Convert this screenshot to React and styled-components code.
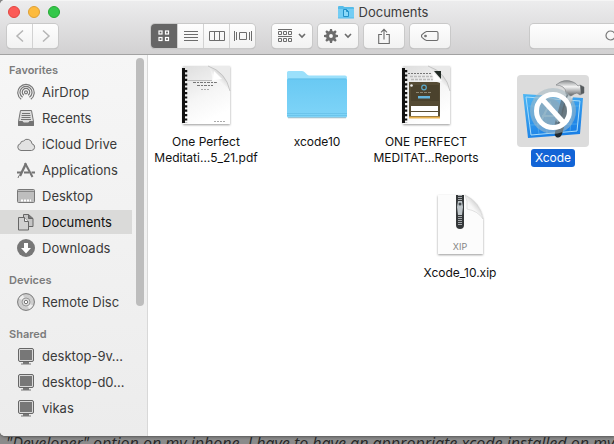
import React from "react";
import styled, { createGlobalStyle } from "styled-components";

const GlobalStyle = createGlobalStyle`
  * { box-sizing: border-box; }
  body { margin: 0; font-family: Inter, "Liberation Sans", sans-serif; color: #333; }
  button { font: inherit; }
  svg { display: block; flex: none; }
`;

const Page = styled.div`
  display: flex;
  flex-direction: column;
  height: 100vh;
  overflow: hidden;
  background: #8b8b8b;
`;

const Window = styled.main`
  flex: 1;
  min-height: 0;
  display: flex;
  flex-direction: column;
  overflow: hidden;
  background: #fff;
  border-radius: 5px 0 0 5px;
  box-shadow: 0 1px 3px #555;
`;

const Header = styled.header`
  height: 55px;
  flex: none;
  background: linear-gradient(#ececed, #d2d1d2);
  border-top: 1px solid #f5f5f5;
  border-bottom: 1px solid #a2a2a2;
`;

const TitleBar = styled.div`
  display: flex;
  align-items: center;
  height: 22px;
`;

const Lights = styled.div`
  display: flex;
  gap: 8px;
  width: 152px;
  padding-left: 8px;
`;

const Light = styled.button`
  width: 12px;
  height: 12px;
  padding: 0;
  border-radius: 50%;
  border: 1px solid ${(p) => p.$edge};
  background: ${(p) => p.$fill};
`;

const Title = styled.h1`
  flex: 1;
  display: flex;
  align-items: center;
  justify-content: center;
  gap: 5px;
  margin: 0;
  font-size: 13px;
  line-height: 16px;
  font-weight: 400;
  color: #3c3c3c;
`;

const Toolbar = styled.div`
  display: flex;
  gap: 6px;
  padding: 1px 0 0 7px;
`;

const ButtonGroup = styled.div`
  display: flex;
  flex: none;
  margin-right: ${(p) => p.$after || 0}px;
  border-radius: 4px;
  box-shadow: 0 0 0 1px #c9c9c9, 0 1px 1px #a5a5a5;
`;

const ToolButton = styled.button`
  display: flex;
  align-items: center;
  justify-content: center;
  gap: 6px;
  width: ${(p) => p.$width}px;
  height: 24px;
  padding: 0;
  border: 0;
  border-left: 1px solid #d2d2d2;
  color: ${(p) => (p.$active ? "#fff" : p.$muted ? "#b5b5b5" : "#6c6c6c")};
  background: ${(p) => (p.$active ? "#666" : "linear-gradient(#fefefe, #f2f2f2)")};
  &:first-child { border-left: 0; border-radius: 4px 0 0 4px; }
  &:last-child { border-radius: 0 4px 4px 0; }
  &:only-child { border-radius: 4px; }
`;

const Search = styled.label`
  flex: none;
  display: flex;
  align-items: center;
  width: 230px;
  height: 24px;
  padding-left: 75px;
  border-radius: 4px;
  color: #777;
  background: linear-gradient(#fefefe, #f2f2f2);
  box-shadow: 0 0 0 1px #c9c9c9, 0 1px 1px #a5a5a5;
`;

const SearchInput = styled.input`
  min-width: 0;
  flex: 1;
  border: 0;
  outline: 0;
  background: transparent;
`;

const Body = styled.div`
  flex: 1;
  min-height: 0;
  display: flex;
`;

const Sidebar = styled.aside`
  flex: none;
  width: 148px;
  display: flex;
  background: linear-gradient(#f6f6f6, #ececec);
  border-right: 1px solid #d8d8d8;
`;

const Places = styled.nav`
  width: 132px;
  padding-top: 5px;
`;

const Section = styled.section`
  margin-bottom: 10px;
`;

const SectionTitle = styled.h2`
  margin: 0;
  padding-left: 9px;
  font-size: 11px;
  line-height: 20px;
  font-weight: 600;
  color: #7b7b7b;
`;

const PlaceList = styled.div`
  display: flex;
  flex-direction: column;
  gap: 2px;
`;

const Place = styled.a`
  display: flex;
  align-items: center;
  gap: 6px;
  height: 24px;
  padding-left: 17px;
  font-size: 13px;
  text-decoration: none;
  white-space: nowrap;
  color: ${(p) => (p.$active ? "#111" : "#3a3a3a")};
  background: ${(p) => (p.$active ? "#dadad9" : "transparent")};
`;

const ScrollThumb = styled.div`
  width: 8px;
  height: 65%;
  margin: 3px 3px 0 4px;
  border-radius: 4px;
  background: #bdbdbd;
`;

const Canvas = styled.section`
  position: relative;
  flex: 1;
  min-width: 0;
  background: #fff;
`;

const FileItem = styled.button`
  position: absolute;
  left: ${(p) => p.$x}px;
  top: ${(p) => p.$y}px;
  width: 110px;
  display: flex;
  flex-direction: column;
  align-items: center;
  gap: 2px;
  padding: 0;
  border: 0;
  background: none;
`;

const Thumb = styled.span`
  width: 72px;
  height: 72px;
  padding: 4px;
  border-radius: 4px;
  background: ${(p) => (p.$active ? "#dcdcdc" : "transparent")};
`;

const FileName = styled.span`
  padding: 1px 4px;
  border-radius: 3px;
  font-size: 12px;
  line-height: 16px;
  white-space: pre;
  color: ${(p) => (p.$active ? "#fff" : "#111")};
  background: ${(p) => (p.$active ? "#1264d6" : "transparent")};
`;

const Article = styled.p`
  flex: none;
  height: 8px;
  margin: 0;
  padding-left: 6px;
  overflow: hidden;
  font-family: "Open Sans", sans-serif;
  font-style: italic;
  font-size: 16px;
  line-height: 14px;
  white-space: nowrap;
  color: #262626;
`;

const line = { fill: "none", stroke: "currentColor" };

const Chevron = ({ d }) => (
  <svg width="10" height="14" viewBox="0 0 10 14" {...line} strokeWidth="1.5"><path d={d} /></svg>
);
const Down = () => (
  <svg width="8" height="6" viewBox="0 0 8 6" {...line} strokeWidth="1.6"><path d="M1 1l3 3 3-3" /></svg>
);
const GridIcon = () => (
  <svg width="12" height="12" viewBox="0 0 12 12" {...line} strokeWidth="1.2">
    {[[1, 1], [7.5, 1], [1, 7.5], [7.5, 7.5]].map(([x, y]) => <rect key={x + "-" + y} x={x} y={y} width="3" height="3" />)}
  </svg>
);
const ListIcon = () => (
  <svg width="14" height="12" viewBox="0 0 14 12" {...line}><path d="M0 1.5h14M0 4.5h14M0 7.5h14M0 10.5h14" /></svg>
);
const ColumnsIcon = () => (
  <svg width="16" height="12" viewBox="0 0 16 12" {...line}><path d="M.5 1.5h15v9H.5zM5.5 1.5v9M10.5 1.5v9" /></svg>
);
const FlowIcon = () => (
  <svg width="18" height="12" viewBox="0 0 18 12" {...line}><path d="M5.5 2.5h7v7h-7zM.5 1v10M2.5 2v8M15.5 2v8M17.5 1v10" /></svg>
);
const ArrangeIcon = () => (
  <svg width="14" height="14" viewBox="0 0 14 14" {...line}>
    <path d="M0 .5h14M0 7.5h14M.5 2.5h3v3h-3zM5.5 2.5h3v3h-3zM10.5 2.5h3v3h-3zM.5 9.5h3v3h-3zM5.5 9.5h3v3h-3zM10.5 9.5h3v3h-3z" />
  </svg>
);
const GearIcon = () => (
  <svg width="14" height="14" viewBox="-7 -7 14 14">
    <g fill="currentColor">
      {[0, 45, 90, 135, 180, 225, 270, 315].map((a) => <path key={a} transform={`rotate(${a})`} d="M-1.6-4L-1-7H1L1.6-4z" />)}
    </g>
    <circle r="3.4" fill="none" stroke="currentColor" strokeWidth="3" />
  </svg>
);
const ShareIcon = () => (
  <svg width="12" height="17" viewBox="0 0 12 17" {...line} strokeWidth="1.1"><path d="M4 6.5H.7v9h10.6v-9H8M6 11.5V1.5M3 4.3l3-3 3 3" /></svg>
);
const TagIcon = () => (
  <svg width="18" height="12" viewBox="0 0 18 12" {...line} strokeWidth="1.1">
    <path d="M5.5 1.5h10q1.5 0 1.5 1.5v6q0 1.5-1.5 1.5h-10Q4 10.2 1 7.3Q0 6 1 4.7Q4 1.8 5.5 1.5z" /><circle cx="4.5" cy="6" r=".8" />
  </svg>
);
const SearchIcon = () => (
  <svg width="13" height="13" viewBox="0 0 13 13" {...line} strokeWidth="1.2"><circle cx="5.5" cy="5.5" r="4.5" /><path d="M9 9l3.5 3.5" /></svg>
);
const TitleFolder = () => (
  <svg width="16" height="14" viewBox="0 0 16 14">
    <path d="M0 2q0-1 1-1h4l1.5 1H15q1 0 1 1v10q0 .6-.6.6H.6Q0 13.6 0 13z" fill="#56bce9" />
    <path d="M0 4h16v8.5H0z" fill="#74cdf4" />
    <path d="M5.5 4.5h3l2 2v5h-5zM8.5 4.5v2h2" fill="#8bd8f8" stroke="#2291c9" />
  </svg>
);

const placeArt = {
  airdrop: (
    <g fill="none" stroke="#777" strokeWidth="1.2">
      <path d="M4.2 16.3a8.2 8.2 0 1 1 9.6 0M5.6 14.3a6 6 0 1 1 6.8 0M6.9 12.2a3.7 3.7 0 1 1 4.2 0" />
      <circle cx="9" cy="9.3" r="1.5" />
    </g>
  ),
  recents: (
    <g stroke="#747474"><path d="M3.5 1.5h11l2 11v4h-15v-4z" fill="#ddd" /><path d="M5 4.5h8M4.5 6.5h9M4.5 8.5h9M4 10.5h10" /><path d="M1.5 12.5h4l1 1.5h5l1-1.5h4v4h-15z" fill="#747474" /></g>
  ),
  cloud: <path d="M4 15.500a3.500 3.500 0 0 1-.5-6.900A2.800 2.800 0 0 1 6.500 6 4.800 4.800 0 0 1 15 8.800a3.400 3.400 0 0 1-.5 6.700z" fill="#e2e2e2" stroke="#777" />,
  apps: (
    <g fill="none" stroke="#747474"><path d="M9 2.500L3 15" strokeWidth="2.4" /><path d="M8 2l7.500 14" strokeWidth="2" /><path d="M0 11.500h5M7 11.500h5M14.500 11.500H18" strokeWidth="1.8" /><path d="M2 14.500L1 17" /></g>
  ),
  desktop: (
    <g><rect x=".5" y="2.5" width="17" height="13" rx="1" fill="#bebebe" stroke="#777" /><path d="M1 4.5h16" stroke="#888" /><path d="M4 13.5h10" stroke="#fff" strokeWidth="2" strokeDasharray="2 1" /></g>
  ),
  documents: (
    <g fill="#c5c5c5" stroke="#666"><path d="M6.5 1.5h5l4.500 4v8H6.5z" /><path d="M11.5 1.5v4H16" fill="#777" /><path d="M1.500 4.500h6l4 4v8.500h-10z" fill="#d0d0d0" /><path d="M7.500 4.500v4h4" fill="#eee" /></g>
  ),
  downloads: (
    <g><circle cx="9" cy="9" r="9" fill="#777" /><path d="M7 4h4v5h3l-5 5.5L4 9h3z" fill="#fff" /></g>
  ),
  disc: (
    <g fill="none" stroke="#777"><circle cx="9" cy="9" r="8.4" fill="#cecece" /><path d="M9 9L2 5.5A8 8 0 0 1 6 2zM9 9l7 3.5a8 8 0 0 1-4 3.5z" fill="#eee" stroke="none" /><circle cx="9" cy="9" r="4" fill="#ddd" stroke="#999" /><circle cx="9" cy="9" r="1.7" fill="#fff" /></g>
  ),
  pc: (
    <g><rect x="1.5" y="1.5" width="15" height="13" rx="1.5" fill="#d8d8d8" stroke="#666" /><rect x="3.5" y="3.5" width="11" height="9" fill="#777" stroke="#777" /><path d="M6 15h6v1.5H6zM4 16.5h10v1H4z" fill="#777" /></g>
  ),
};

const PaperDefs = ({ id }) => (
  <defs>
    <filter id={id + "-shadow"} x="-10%" y="-10%" width="125%" height="125%"><feDropShadow dx="0" dy="1" stdDeviation="1" floodOpacity=".4" /></filter>
    <linearGradient id={id + "-paper"} x2=".4" y2="1"><stop stopColor="#dedede" /><stop offset=".6" stopColor="#f6f6f6" /><stop offset="1" stopColor="#fff" /></linearGradient>
    <linearGradient id={id + "-curl"} x1="0" y1="1" x2=".7" y2=".2"><stop offset=".2" stopColor="#fff" /><stop offset=".6" stopColor="#f6f6f6" /><stop offset="1" stopColor="#c4c4c4" /></linearGradient>
  </defs>
);

const Binding = () => (
  <g>
    <path d="M8 5h3v55H8z" fill="#111" />
    <path d="M12 7v53" stroke="#111" strokeWidth="2.5" strokeDasharray="2.2 2.2" />
  </g>
);

const PdfArt = () => (
  <svg width="64" height="64" viewBox="0 0 64 64">
    <PaperDefs id="pdf" />
    <path d="M9 3h47v58H9z" fill="url(#pdf-paper)" filter="url(#pdf-shadow)" />
    <path d="M34 3h22v24Q51 9 34 3z" fill="#ebebeb" />
    <Binding />
    <path d="M14 17.5h25" stroke="#bbb" />
    <path d="M19 19.5h25M23 22.5h16" stroke="#777" strokeDasharray="3 1 2 1" />
    <path d="M27 26.5h8M40 58.5h11" stroke="#aaa" strokeDasharray="2 1" />
    <path d="M34 3Q52 9 56 28Q51 20 38 18Q39 10 34 3z" fill="url(#pdf-curl)" />
    <path d="M34 3Q52 9 56 28" fill="none" stroke="#bdbdbd" strokeWidth=".8" />
    <path d="M40 8l8 8-9 1z" fill="#fff" />
  </svg>
);

const ReportArt = () => (
  <svg width="64" height="64" viewBox="0 0 64 64">
    <PaperDefs id="report" />
    <path d="M9 3h47v58H9z" fill="url(#report-paper)" filter="url(#report-shadow)" />
    <path d="M34 3h22v24Q51 9 34 3z" fill="#e9e9e9" />
    <Binding />
    <path d="M14 10.5h25" stroke="#777" strokeDasharray="2 1" />
    <path d="M16 13.5h24M17 16.5h22" stroke="#bbb" strokeWidth="1.5" strokeDasharray="3 1" />
    <path d="M15 19h31v36H15z" fill="#554b34" />
    <path d="M17 22h28v16H17z" fill="#473e2b" opacity=".7" />
    <circle cx="30" cy="24.5" r="2.3" fill="none" stroke="#5aa8c8" strokeWidth="1.2" />
    <path d="M22 29.5h15" stroke="#8d8672" strokeDasharray="3 1" />
    <path d="M24 33h12v2.5H24z" fill="#65b5dc" />
    <circle cx="17.500" cy="22.500" r="1.3" fill="#eee" />
    <path d="M17 43h27v5H17zM17 49h27v4H17z" fill="#fff" />
    <path d="M15 54.5h31" stroke="#e9b351" strokeWidth="2" />
    <path d="M34 3Q52 9 56 28Q52 20 39 18Q39 10 34 3z" fill="url(#report-curl)" />
    <path d="M34 3Q52 9 56 28" fill="none" stroke="#bdbdbd" strokeWidth=".8" />
    <path d="M39 9l9 9-8-1z" fill="#fff" /><path d="M40 8h7v8z" fill="#222b26" />
  </svg>
);

const FolderArt = () => (
  <svg width="64" height="64" viewBox="0 0 64 64">
    <defs><linearGradient id="folder-front" x2="0" y2="1"><stop stopColor="#69c9f3" /><stop offset="1" stopColor="#7fd4f8" /></linearGradient></defs>
    <path d="M2 9.500Q2 8 3.500 8H17q2 0 3 1.500l2 2q1 1 2.500 1H60q2 0 2 2V53q0 1.500-1.500 1.500h-57Q2 54.500 2 53z" fill="#9be0fb" />
    <path d="M2 17q0-1.500 1.500-1.500h57q1.500 0 1.500 1.500v36q0 1.500-1.500 1.500h-57Q2 54.500 2 53z" fill="url(#folder-front)" />
    <path d="M2 50.500h60M2 52.500h60M3 16h58" stroke="#5fbbe3" strokeWidth=".6" />
    <path d="M3 54.800h58" stroke="#91a9b3" strokeWidth=".7" />
  </svg>
);

const XcodeArt = () => (
  <svg width="64" height="64" viewBox="0 0 64 64">
    <defs>
      <linearGradient id="xc-blue" x2=".4" y2="1"><stop stopColor="#4eb7f4" /><stop offset="1" stopColor="#1a80e6" /></linearGradient>
      <linearGradient id="xc-steel" x2="0" y2="1"><stop stopColor="#8b8e90" /><stop offset=".4" stopColor="#f4f4f4" /><stop offset="1" stopColor="#5f6366" /></linearGradient>
    </defs>
    <path d="M2 15l60 4-3 36-52 4z" fill="url(#xc-blue)" />
    <path d="M5 18l54 4-3 30-46 4z" fill="none" stroke="#a8dcfa" />
    <path d="M13 19l5 36M23 20l3 34M52 22l-3 31M6 27h52M8 46l48-1" stroke="#66bdf2" strokeWidth=".5" />
    <path d="M46 15l6 2-11 38q-2 5-6 3-2-2-1-5z" fill="#222b32" />
    <path d="M48 12l5 2-4 15-5-2z" fill="url(#xc-steel)" />
    <path d="M35 6q8-7 17-3 3 1 5 4l2-1 4 2v6l-4 2-3-2-3 1-3 2-5-2q0-5-3-7-3-2-7-2z" fill="url(#xc-steel)" stroke="#75797c" strokeWidth=".6" />
    <path d="M59 6l4 2v6l-3 1z" fill="#555a5d" />
    <circle cx="32" cy="32" r="23" fill="#a5b9c2" fillOpacity=".55" />
    <circle cx="27" cy="33" r="14" fill="#88a7ba" fillOpacity=".65" />
    <path d="M43 20l-8 30" stroke="#59656c" strokeWidth="5" opacity=".65" />
    <path d="M20 42l9-18 8 19M21 37h18" fill="none" stroke="#9bbaca" strokeWidth="2" opacity=".7" />
    <circle cx="32" cy="32" r="16.5" fill="none" stroke="#fff" strokeWidth="5" />
    <path d="M21 20l22 24" stroke="#fff" strokeWidth="5" />
  </svg>
);

const ArchiveLabel = styled.text`
  font-family: Inter, sans-serif;
  font-size: 9px;
  fill: #858585;
  text-anchor: middle;
`;

const XipArt = () => (
  <svg width="64" height="64" viewBox="0 0 64 64">
    <PaperDefs id="xip" />
    <path d="M10 1h27q15 8 18 24v35H10z" fill="#fcfcfc" filter="url(#xip-shadow)" />
    <path d="M28 1h8v30q0 4-4 4t-4-4z" fill="#35383a" />
    <path d="M32 1v7M32 20v12" stroke="#a5a9ad" strokeWidth="4" strokeDasharray="1 1" />
    <path d="M30 7h4l1 6-1 8h-4l-1-8z" fill="#bfc6ca" /><circle cx="32" cy="10" r="1.5" fill="#454b4f" />
    <path d="M37 1Q52 8 55 25Q50 17 39 15Q40 7 37 1z" fill="url(#xip-curl)" stroke="#d0d0d0" strokeWidth=".6" />
    <ArchiveLabel x="32" y="56">XIP</ArchiveLabel>
  </svg>
);

const sections = [
  ["Favorites", [["AirDrop", "airdrop"], ["Recents", "recents"], ["iCloud Drive", "cloud"], ["Applications", "apps"], ["Desktop", "desktop"], ["Documents", "documents"], ["Downloads", "downloads"]]],
  ["Devices", [["Remote Disc", "disc"]]],
  ["Shared", [["desktop-9v…", "pc"], ["desktop-d0…", "pc"], ["vikas", "pc"]]],
];

const files = [
  { name: "One Perfect\nMeditati…5_21.pdf", x: 3, y: 4, Art: PdfArt },
  { name: "xcode10", x: 114, y: 4, Art: FolderArt },
  { name: "ONE PERFECT\nMEDITAT…Reports", x: 223, y: 4, Art: ReportArt },
  { name: "Xcode", x: 350, y: 20, Art: XcodeArt, active: true },
  { name: "Xcode_10.xip", x: 257, y: 135, Art: XipArt },
];

export default function App() {
  return (
    <Page>
      <GlobalStyle />
      <Window>
        <Header>
          <TitleBar>
            <Lights>
              <Light aria-label="Close" $fill="#fc5b57" $edge="#e24640" />
              <Light aria-label="Minimize" $fill="#fdbb3e" $edge="#dfa035" />
              <Light aria-label="Zoom" $fill="#34c84a" $edge="#24a933" />
            </Lights>
            <Title><TitleFolder />Documents</Title>
          </TitleBar>
          <Toolbar>
            <ButtonGroup $after={87}>
              <ToolButton $width={25} $muted aria-label="Back"><Chevron d="M8 1.5L2 7l6 5.5" /></ToolButton>
              <ToolButton $width={26} $muted aria-label="Forward"><Chevron d="M2 1.5L8 7l-6 5.5" /></ToolButton>
            </ButtonGroup>
            <ButtonGroup $after={11}>
              <ToolButton $width={26} $active aria-label="Icon view"><GridIcon /></ToolButton>
              <ToolButton $width={26} aria-label="List view"><ListIcon /></ToolButton>
              <ToolButton $width={26} aria-label="Column view"><ColumnsIcon /></ToolButton>
              <ToolButton $width={26} aria-label="Cover flow"><FlowIcon /></ToolButton>
            </ButtonGroup>
            <ButtonGroup><ToolButton $width={40} aria-label="Arrange"><ArrangeIcon /><Down /></ToolButton></ButtonGroup>
            <ButtonGroup><ToolButton $width={40} aria-label="Actions"><GearIcon /><Down /></ToolButton></ButtonGroup>
            <ButtonGroup><ToolButton $width={40} aria-label="Share"><ShareIcon /></ToolButton></ButtonGroup>
            <ButtonGroup $after={74}><ToolButton $width={40} aria-label="Edit tags"><TagIcon /></ToolButton></ButtonGroup>
            <Search><SearchIcon /><SearchInput type="search" aria-label="Search" /></Search>
          </Toolbar>
        </Header>
        <Body>
          <Sidebar>
            <Places>
              {sections.map(([title, places]) => (
                <Section key={title}>
                  <SectionTitle>{title}</SectionTitle>
                  <PlaceList>
                    {places.map(([name, icon]) => (
                      <Place key={name} href="#" $active={name === "Documents"}>
                        <svg width="19" height="18" viewBox="0 0 19 18">{placeArt[icon]}</svg>
                        {name}
                      </Place>
                    ))}
                  </PlaceList>
                </Section>
              ))}
            </Places>
            <ScrollThumb />
          </Sidebar>
          <Canvas>
            {files.map(({ name, x, y, Art, active }) => (
              <FileItem key={name} $x={x} $y={y}>
                <Thumb $active={active}><Art /></Thumb>
                <FileName $active={active}>{name}</FileName>
              </FileItem>
            ))}
          </Canvas>
        </Body>
      </Window>
      <Article>"Developer" option on my iphone. I have to have an appropriate xcode installed on my</Article>
    </Page>
  );
}
